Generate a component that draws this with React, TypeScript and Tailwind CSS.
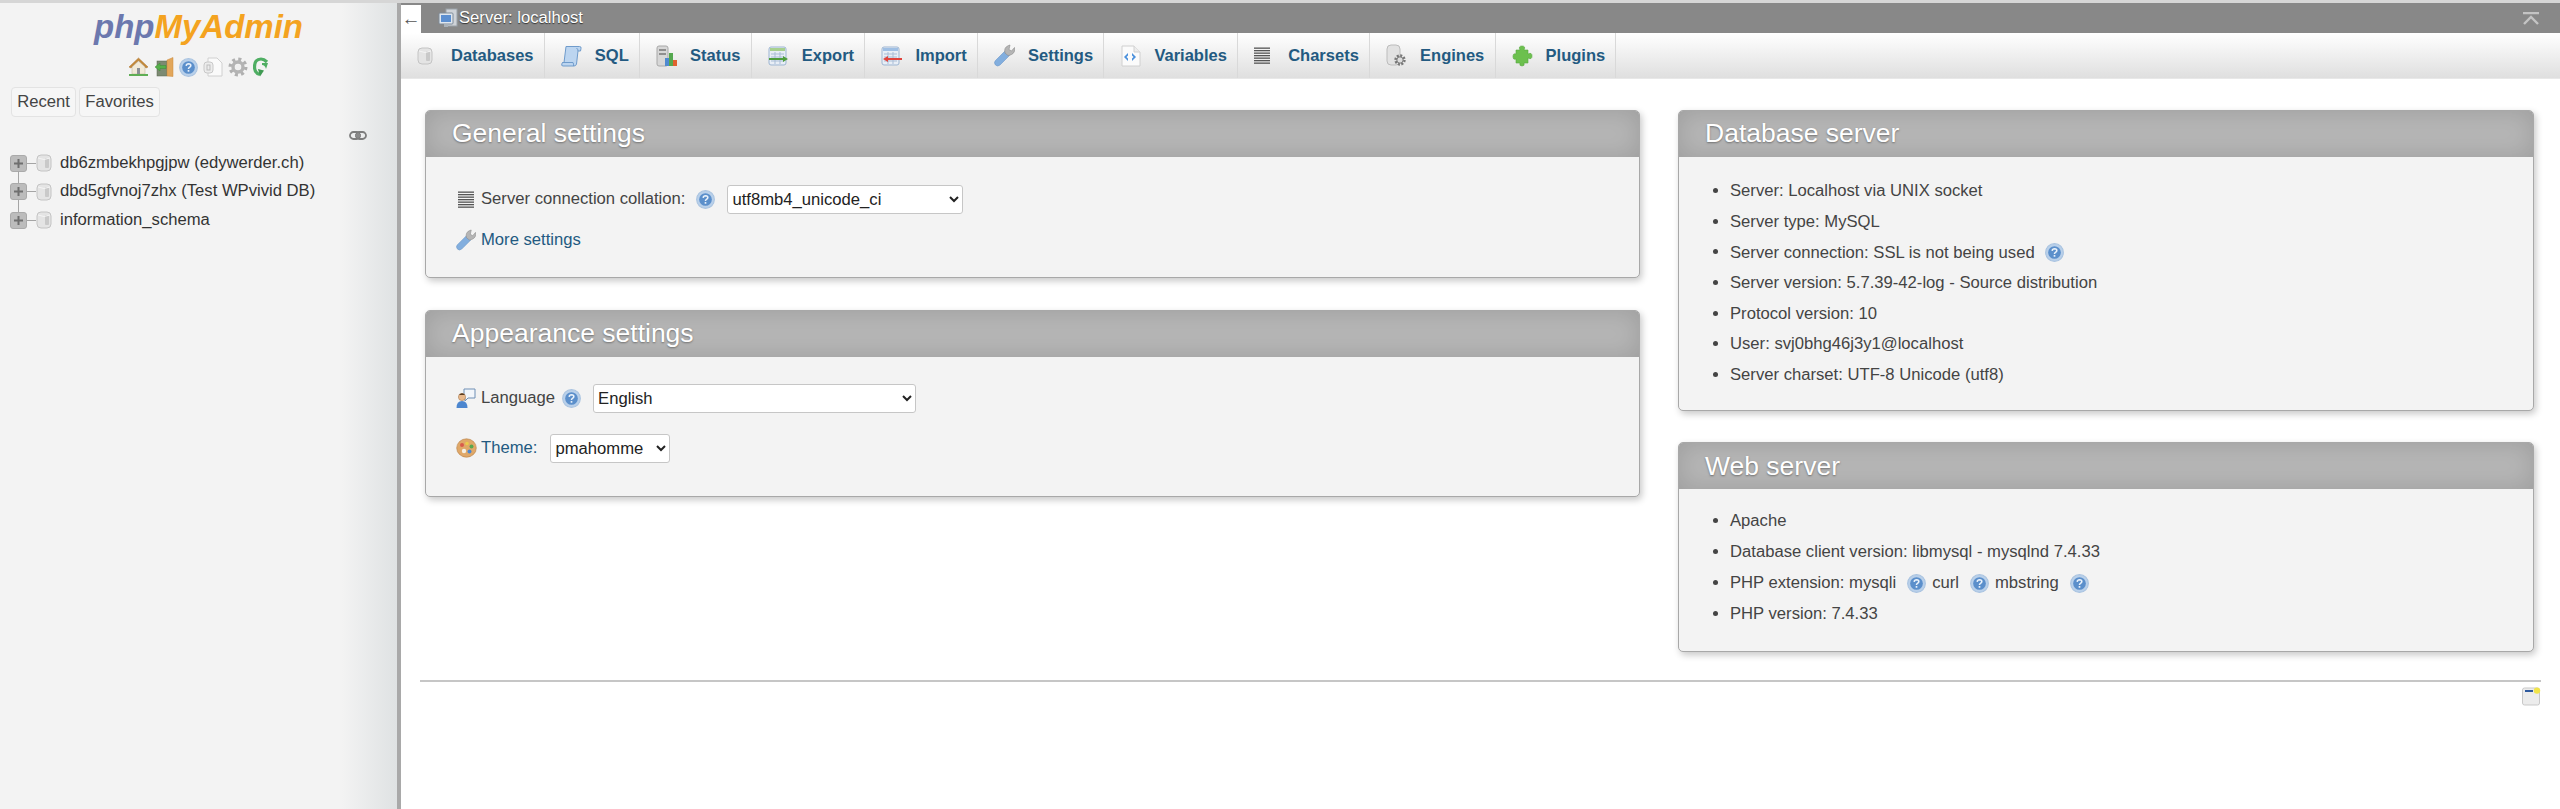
import React from 'react';

function Cylinder({ className = 'w-[16px] h-[18px]' }: { className?: string }) {
  return (
    <svg viewBox="0 0 16 18" className={className}>
      <rect x="1" y="1" width="14" height="16" rx="4" fill="#e4e4e4" stroke="#c4c4c4" />
      <rect x="9" y="4" width="4" height="10" rx="1" fill="#c9c9c9" />
      <path d="M2 4 Q8 7 14 4" fill="none" stroke="#f5f5f5" />
    </svg>
  );
}

function Help() {
  return (
    <svg viewBox="0 0 18 18" className="w-[19px] h-[19px] shrink-0">
      <circle cx="9" cy="9" r="8.4" fill="#b9d0ea" stroke="#a9c3e0" />
      <circle cx="9" cy="9" r="6" fill="#5b8fcb" />
      <path d="M6.8 7.4 Q7 5.4 9.1 5.4 Q11.2 5.5 11.2 7.2 Q11.2 8.3 9.9 8.9 Q9 9.3 9 10.5" fill="none" stroke="#eaf2fb" strokeWidth="1.5" />
      <rect x="8.2" y="11.4" width="1.6" height="1.6" fill="#eaf2fb" />
    </svg>
  );
}

function Scroll() {
  return (
    <svg viewBox="0 0 21 22" className="w-[21px] h-[22px]">
      <path d="M5 1.5 H18.5 Q20.5 1.5 20 3.5 L19.5 6 H17 L15.5 19 Q15 21 13 21 H2 Q0.2 21 0.8 19 L1.5 17.5 H3 Z" fill="#bcd5f0" stroke="#6f9bcb" />
      <path d="M1.5 17.5 H12 Q12.8 19 12.5 21" fill="none" stroke="#6f9bcb" />
      <path d="M15.5 3 Q17 4 17 6" fill="none" stroke="#6f9bcb" />
    </svg>
  );
}

function StatusIcon() {
  return (
    <svg viewBox="0 0 21 22" className="w-[21px] h-[22px]">
      <rect x="1" y="1" width="11" height="20" rx="2" fill="#d7d7d7" stroke="#a8a8a8" />
      <rect x="3" y="4" width="7" height="2" fill="#8f8f8f" />
      <rect x="3" y="8" width="7" height="2" fill="#8f8f8f" />
      <rect x="9" y="13" width="4" height="8" fill="#4f8ad0" />
      <rect x="13" y="8" width="4" height="13" fill="#55a84f" />
      <rect x="17" y="15" width="4" height="6" fill="#e0622e" />
    </svg>
  );
}

function TableArrow({ color, dir }: { color: string; dir: 'right' | 'left' }) {
  return (
    <svg viewBox="0 0 21 20" className="w-[21px] h-[20px]">
      <rect x="1" y="1" width="17" height="18" rx="2" fill="#e8eef6" stroke="#9db5d2" />
      <rect x="2" y="2" width="15" height="3" fill={dir === 'right' ? '#a7d08f' : '#9fbfe4'} />
      <path d="M3 8 H16 M3 11 H16 M3 15 H16 M7 6 V18 M12 6 V18" stroke="#a9bdd6" fill="none" />
      {dir === 'right' ? (
        <path d="M1 12 H15 V10 L20 13 L15 16 V14 H1 Z" fill={color} />
      ) : (
        <path d="M21 12 H7 V10 L2 13 L7 16 V14 H21 Z" fill={color} />
      )}
    </svg>
  );
}

function Wrench({ className = 'w-[21px] h-[23px]' }: { className?: string }) {
  return (
    <svg viewBox="0 0 21 23" className={className}>
      <path d="M1.5 16.5 L11 7 L15.5 11.5 L6 21 Q3.5 23 1.5 21 Q-0.5 18.5 1.5 16.5 Z" fill="#82aede" stroke="#6b97c9" strokeWidth="0.6" />
      <path d="M11 9 Q9.5 3.5 14.5 1.5 L16 1 L15 5.5 L17.5 7 L20.5 3.5 Q21.5 8.5 17.5 10.5 Q15.5 11.5 14 11.5 Z" fill="#b5b5b5" stroke="#8c8c8c" strokeWidth="0.6" />
    </svg>
  );
}

function VariablesIcon() {
  return (
    <svg viewBox="0 0 21 22" className="w-[21px] h-[22px]">
      <path d="M2 1 H14 L20 7 V21 H2 Z" fill="#fbfbfb" stroke="#d0d0d0" />
      <path d="M14 1 V7 H20" fill="#ececec" stroke="#d0d0d0" />
      <path d="M8 8 L4 12 L8 16 V13.5 L6.5 12 L8 10.5 Z" fill="#4a90dc" />
      <path d="M12 8 L16 12 L12 16 V13.5 L13.5 12 L12 10.5 Z" fill="#4a90dc" />
    </svg>
  );
}

function Lines({ className = 'w-[16px] h-[17px]' }: { className?: string }) {
  return (
    <svg viewBox="0 0 16 17" className={className}>
      {[0.5, 3, 5.5, 8, 10.5, 13, 15.5].map(y => (
        <rect key={y} x="0" y={y} width="16" height="1.3" fill="#555" />
      ))}
    </svg>
  );
}

function EnginesIcon() {
  return (
    <svg viewBox="0 0 21 24" className="w-[21px] h-[24px]">
      <rect x="1" y="1" width="13" height="20" rx="4" fill="#e2e2e2" stroke="#bcbcbc" />
      <circle cx="14" cy="16" r="4.4" fill="none" stroke="#777" strokeWidth="2.6" strokeDasharray="2 1.4" />
      <circle cx="14" cy="16" r="3.2" fill="#ddd" stroke="#777" />
    </svg>
  );
}

function Puzzle() {
  return (
    <svg viewBox="0 0 21 22" className="w-[21px] h-[22px]">
      <path d="M4 5 H8 Q6 1 10 1 Q14 1 12 5 H16 V9 Q20 7 20 11 Q20 15 16 13 V18 H12 Q13 21 10 21 Q7 21 8 18 H4 V14 Q1 15 1 11.5 Q1 8 4 9 Z" fill="#6cc04e" stroke="#58a83f" strokeWidth="0.6" />
    </svg>
  );
}

function ServerIcon() {
  return (
    <svg viewBox="0 0 20 21" className="w-[20px] h-[21px]">
      <rect x="8" y="1" width="11" height="17" fill="#cfd3d8" stroke="#9aa1a8" />
      <rect x="1" y="5" width="14" height="11" rx="1" fill="#dfe6ee" stroke="#7f8b98" />
      <rect x="3" y="7" width="10" height="7" fill="#5c8fd0" />
      <rect x="6" y="16" width="4" height="3" fill="#a9b1b9" />
    </svg>
  );
}

function Home() {
  return (
    <svg viewBox="0 0 21 20" className="w-[21px] h-[20px]">
      <path d="M1 10 L10.5 1 L20 10 L18 11 L10.5 4 L3 11 Z" fill="#c48a3a" stroke="#a86f28" strokeWidth="0.5" />
      <path d="M4 10 L10.5 4 L17 10 V17 H4 Z" fill="#f1ead8" stroke="#b9ad92" strokeWidth="0.5" />
      <rect x="9" y="11" width="3" height="6" fill="#8b8f94" />
      <rect x="1" y="17" width="19" height="2" fill="#5fae55" />
    </svg>
  );
}

function Exit() {
  return (
    <svg viewBox="0 0 20 20" className="w-[20px] h-[20px]">
      <rect x="3" y="4" width="10" height="15" fill="#7c8a72" stroke="#59644f" strokeWidth="0.5" />
      <path d="M13 3 L19 0.5 V19.5 L13 19 Z" fill="#e2a65a" stroke="#c98a3e" strokeWidth="0.5" />
      <path d="M1 10 L6 6 V8.5 H12 V11.5 H6 V14 Z" fill="#55b04a" stroke="#3f8d37" strokeWidth="0.5" />
    </svg>
  );
}

function Docs() {
  return (
    <svg viewBox="0 0 20 20" className="w-[20px] h-[20px]">
      <path d="M5 1 H14 L19 6 V19 H5 Z" fill="#fafafa" stroke="#d0d0d0" />
      <rect x="1" y="5" width="9" height="11" rx="3" fill="#ececec" stroke="#c8c8c8" />
      <rect x="4" y="8" width="3" height="5" fill="none" stroke="#bdbdbd" />
    </svg>
  );
}

function Gear() {
  return (
    <svg viewBox="0 0 20 20" className="w-[20px] h-[20px]">
      <circle cx="10" cy="10" r="7.8" fill="none" stroke="#b0b0b0" strokeWidth="3.4" strokeDasharray="3 3.13" />
      <circle cx="10" cy="10" r="5" fill="none" stroke="#b4b4b4" strokeWidth="3.4" />
      <circle cx="10" cy="10" r="2.6" fill="#f0f0f0" />
    </svg>
  );
}

function Reload() {
  return (
    <svg viewBox="0 0 16 20" className="w-[16px] h-[20px]">
      <path d="M14 5 Q11 2 8 2 Q1.5 2 1.5 10 Q1.5 16 7 17.5" fill="none" stroke="#4fae63" strokeWidth="3.2" />
      <path d="M9 6 H15 L13 12 Q12 8 9 8 Z" fill="#4fae63" />
      <path d="M5 12 L11 13.5 L7 19.5 Z" fill="#3f9a52" />
    </svg>
  );
}

function LinkIcon() {
  return (
    <svg viewBox="0 0 18 9" className="w-[18px] h-[9px]">
      <rect x="1" y="1" width="10" height="7" rx="3.5" fill="none" stroke="#7d7d7d" strokeWidth="1.8" />
      <rect x="7" y="1" width="10" height="7" rx="3.5" fill="none" stroke="#7d7d7d" strokeWidth="1.8" />
      <rect x="6" y="3" width="6" height="3" fill="#8a8a8a" />
    </svg>
  );
}

function Expander() {
  return (
    <div className="w-[17px] h-[17px] rounded-[3px] bg-[#bcbcbc] border border-[#aaaaaa] flex items-center justify-center shrink-0">
      <svg viewBox="0 0 9 9" className="w-[9px] h-[9px]">
        <path d="M4.5 0 V9 M0 4.5 H9" stroke="#6f6f6f" strokeWidth="2" />
      </svg>
    </div>
  );
}

function Person() {
  return (
    <svg viewBox="0 0 20 21" className="w-[20px] h-[21px]">
      <path d="M8 1 H19 V10 H12 L9 13 V10 H8 Z" fill="#f2f6fb" stroke="#6f8fb5" />
      <circle cx="6" cy="9" r="3.6" fill="#e9b98c" stroke="#9a6b3e" strokeWidth="0.5" />
      <path d="M3 7 Q6 3.5 9 7 Z" fill="#5b3b1e" />
      <path d="M0.5 20 Q0.5 13 6 13 Q11.5 13 11.5 20 Z" fill="#4c86cf" />
    </svg>
  );
}

function Palette() {
  return (
    <svg viewBox="0 0 21 20" className="w-[21px] h-[20px]">
      <ellipse cx="10.5" cy="10" rx="9.8" ry="9.2" fill="#e0a868" stroke="#b77f44" strokeWidth="0.6" />
      <circle cx="6" cy="7" r="2" fill="#d95a4a" />
      <circle cx="11" cy="5.5" r="1.8" fill="#e9cc4c" />
      <circle cx="15.5" cy="8.5" r="2" fill="#58a74e" />
      <circle cx="13.5" cy="13.5" r="2" fill="#4c86cf" />
      <circle cx="8" cy="13" r="2.2" fill="#f4efe4" />
    </svg>
  );
}

function NoteIcon() {
  return (
    <svg viewBox="0 0 19 19" className="w-[19px] h-[19px]">
      <rect x="0.5" y="1" width="17" height="17" rx="2" fill="#ececec" stroke="#c9c9c9" />
      <rect x="3" y="3" width="8" height="2" fill="#2f5a9e" />
      <circle cx="15" cy="3.6" r="3.2" fill="#f0e34a" />
    </svg>
  );
}

const tabs: { name: string; icon: React.ReactNode }[] = [
  { name: 'Databases', icon: <Cylinder /> },
  { name: 'SQL', icon: <Scroll /> },
  { name: 'Status', icon: <StatusIcon /> },
  { name: 'Export', icon: <TableArrow color="#4f9e3c" dir="right" /> },
  { name: 'Import', icon: <TableArrow color="#e0433c" dir="left" /> },
  { name: 'Settings', icon: <Wrench /> },
  { name: 'Variables', icon: <VariablesIcon /> },
  { name: 'Charsets', icon: <Lines /> },
  { name: 'Engines', icon: <EnginesIcon /> },
  { name: 'Plugins', icon: <Puzzle /> },
];

const databases = ['db6zmbekhpgjpw (edywerder.ch)', 'dbd5gfvnoj7zhx (Test WPvivid DB)', 'information_schema'];

function Panel({ title, children }: { title: string; children: React.ReactNode }) {
  return (
    <div className="rounded-[5px] border border-[#a8a8a8] bg-[#f3f3f3] shadow-[2px_3px_7px_rgba(0,0,0,0.22)] overflow-hidden">
      <h2 className="h-[46px] pl-[26px] flex items-center bg-[#b6b6b6] shadow-[inset_0_0_26px_rgba(0,0,0,0.14)] text-[26.5px] font-normal text-white [text-shadow:0_1px_2px_#6e6e6e]">
        {title}
      </h2>
      {children}
    </div>
  );
}

function Select({ value, className }: { value: string; className: string }) {
  return (
    <select
      defaultValue={value}
      className={`h-[29px] rounded-[3px] border border-[#c6c6c6] bg-white text-[#222] shrink-0 ${className}`}
    >
      <option>{value}</option>
    </select>
  );
}

export default function App() {
  return (
    <div className="flex h-[809px] w-full overflow-hidden border-t-[3px] border-[#d6d6d6] bg-white font-['Liberation_Sans',Arial,sans-serif] text-[16.65px] text-[#444]">
      {/* navigation */}
      <aside className="w-[401px] shrink-0 border-r-4 border-[#a9a9a9] bg-[linear-gradient(to_right,#f3f3f3_86%,#dfe2e3_100%)]">
        <div className="h-[46px] flex items-center justify-center text-[33px] font-bold italic leading-none">
          <span className="text-[#6c78ae]">php</span>
          <span className="text-[#f4a320]">MyAdmin</span>
        </div>
        <div className="mt-[8px] h-[20px] flex items-center justify-center gap-[5px]">
          <Home />
          <Exit />
          <Help />
          <Docs />
          <Gear />
          <Reload />
        </div>
        <div className="mt-[10px] flex gap-[3px] pl-[11px]">
          <button className="h-[30px] w-[65px] rounded-[4px] border border-[#e3e3e3] bg-[#f6f6f6]">Recent</button>
          <button className="h-[30px] w-[81px] rounded-[4px] border border-[#e3e3e3] bg-[#f6f6f6]">Favorites</button>
        </div>
        <div className="mt-[14px] flex justify-end pr-[30px]">
          <LinkIcon />
        </div>
        <ul className="mt-[9px] pl-[10px] text-[#333]">
          {databases.map((db, i) => (
            <li key={db} className="relative h-[28.5px] flex items-center">
              <Expander />
              {i < databases.length - 1 && <span className="absolute left-[8px] top-[22px] h-[13px] w-px bg-[#a5a5a5]" />}
              <span className="w-[9px] h-px bg-[#a5a5a5]" />
              <Cylinder />
              <span className="ml-[8px]">{db}</span>
            </li>
          ))}
        </ul>
      </aside>

      <main className="flex-1 min-w-0">
        {/* server breadcrumb */}
        <div className="h-[30px] flex items-center bg-[#888888] text-white">
          <div className="h-[28px] w-[20px] mt-[1px] bg-white text-[#555] flex items-center justify-center text-[19px] leading-none">←</div>
          <div className="ml-[17px]"><ServerIcon /></div>
          <span className="ml-px [text-shadow:0_1px_1px_#333]">Server: localhost</span>
          <svg viewBox="0 0 16 13" className="ml-auto mr-[21px] w-[16px] h-[13px]">
            <path d="M0 1 H16 M1 12 L8 5 L15 12" fill="none" stroke="#c4c4c4" strokeWidth="2.4" />
          </svg>
        </div>

        {/* tabs */}
        <nav className="h-[46px] flex bg-[linear-gradient(to_bottom,#ffffff,#dfdfdf)] border-b border-[#e8e8e8] text-[16.5px]">
          {tabs.map(tab => (
            <a key={tab.name} className="flex items-center pl-[16px] pr-[10.3px] border-r border-[#d9d9d9] font-bold text-[#235a81]">
              <span className="w-[34px] flex items-center">{tab.icon}</span>
              {tab.name}
            </a>
          ))}
        </nav>

        <div className="px-[19px]">
          <div className="flex gap-[38px] pt-[31px] pl-[5px] pr-[7px]">
            <div className="w-[1215px] shrink-0 flex flex-col gap-[32px]">
              <Panel title="General settings">
                <div className="pl-[30px] pt-[28px] pb-[24px]">
                  <div className="flex items-center">
                    <span className="w-[25px] pl-[2px]"><Lines /></span>
                    <span>Server connection collation:</span>
                    <span className="ml-[11px] mr-[12px]"><Help /></span>
                    <Select value="utf8mb4_unicode_ci" className="w-[236px]" />
                  </div>
                  <a className="mt-[14px] flex items-center text-[#235a81]">
                    <span className="w-[25px]"><Wrench className="w-[20px] h-[22px]" /></span>
                    More settings
                  </a>
                </div>
              </Panel>
              <Panel title="Appearance settings">
                <div className="pl-[30px] pt-[27px] pb-[33px]">
                  <div className="flex items-center">
                    <span className="w-[25px]"><Person /></span>
                    <span>Language</span>
                    <span className="ml-[7px] mr-[12px]"><Help /></span>
                    <Select value="English" className="w-[323px]" />
                  </div>
                  <div className="mt-[21px] flex items-center">
                    <span className="w-[25px]"><Palette /></span>
                    <a className="text-[#235a81]">Theme:</a>
                    <Select value="pmahomme" className="ml-[13px] w-[120px]" />
                  </div>
                </div>
              </Panel>
            </div>

            <div className="flex-1 flex flex-col gap-[31px]">
              <Panel title="Database server">
                <ul className="list-disc pl-[51px] pt-[19px] pb-[20px] leading-[30.6px]">
                  <li>Server: Localhost via UNIX socket</li>
                  <li>Server type: MySQL</li>
                  <li>
                    <span className="inline-flex items-center gap-[10px] align-middle">Server connection: SSL is not being used <Help /></span>
                  </li>
                  <li>Server version: 5.7.39-42-log - Source distribution</li>
                  <li>Protocol version: 10</li>
                  <li>User: svj0bhg46j3y1@localhost</li>
                  <li>Server charset: UTF-8 Unicode (utf8)</li>
                </ul>
              </Panel>
              <Panel title="Web server">
                <ul className="list-disc pl-[51px] pt-[17px] pb-[22px] leading-[30.6px]">
                  <li>Apache</li>
                  <li>Database client version: libmysql - mysqlnd 7.4.33</li>
                  <li>
                    <span className="inline-flex items-center align-middle">
                      PHP extension: mysqli <span className="ml-[11px] mr-[6px]"><Help /></span>
                      curl <span className="ml-[11px] mr-[6px]"><Help /></span>
                      mbstring <span className="ml-[11px]"><Help /></span>
                    </span>
                  </li>
                  <li>PHP version: 7.4.33</li>
                </ul>
              </Panel>
            </div>
          </div>

          <hr className="mt-[28px] border-t-2 border-[#c6c6c6]" />
          <div className="mt-[5px] flex justify-end">
            <NoteIcon />
          </div>
        </div>
      </main>
    </div>
  );
}
